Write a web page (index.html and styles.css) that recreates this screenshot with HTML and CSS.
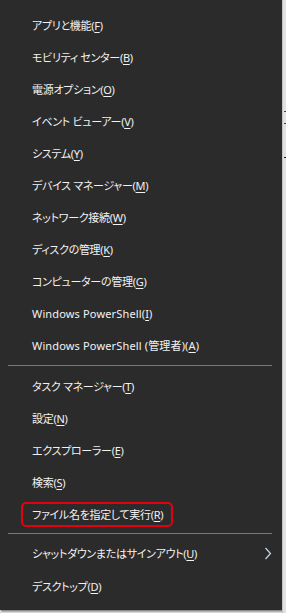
FILE: index.html
```html
<!DOCTYPE html>
<html lang="ja">
  <head>
    <meta charset="UTF-8" />
    <meta name="viewport" content="width=device-width, initial-scale=1.0" />
    <title>クイック リンク メニュー</title>
    <link rel="stylesheet" href="styles.css">
  </head>
  <body>
    <div class="screen">
      <div class="menu">
        <ul class="group">
          <li>アプリと機能(<u>F</u>)</li>
          <li>モビリティ センター(<u>B</u>)</li>
          <li>電源オプション(<u>O</u>)</li>
          <li>イベント ビューアー(<u>V</u>)</li>
          <li>システム(<u>Y</u>)</li>
          <li>デバイス マネージャー(<u>M</u>)</li>
          <li>ネットワーク接続(<u>W</u>)</li>
          <li>ディスクの管理(<u>K</u>)</li>
          <li>コンピューターの管理(<u>G</u>)</li>
          <li class="latin">Windows PowerShell(<u>I</u>)</li>
          <li class="latin">Windows PowerShell (管理者)(<u>A</u>)</li>
        </ul>
        <hr class="sep" />
        <ul class="group">
          <li>タスク マネージャー(<u>T</u>)</li>
          <li>設定(<u>N</u>)</li>
          <li>エクスプローラー(<u>E</u>)</li>
          <li>検索(<u>S</u>)</li>
          <li class="marked"><span class="highlight">ファイル名を指定して実行(<u>R</u>)</span></li>
        </ul>
        <hr class="sep sep-low" />
        <ul class="group">
          <li class="has-sub">
            <span>シャットダウンまたはサインアウト(<u>U</u>)</span>
            <svg class="chevron" width="8" height="13" viewBox="0 0 8 13">
              <path d="M1.5 1 L6.5 6.5 L1.5 12" fill="none" stroke="#c9d6ea" stroke-width="1.2" />
            </svg>
          </li>
          <li class="last">デスクトップ(<u>D</u>)</li>
        </ul>
      </div>
      <div class="behind">
        <i class="tick tick-a"></i>
        <i class="tick tick-b"></i>
        <i class="tick tick-c"></i>
      </div>
    </div>
  </body>
</html>
```

FILE: styles.css
```css
* {
  margin: 0;
  padding: 0;
  box-sizing: border-box;
}

body {
  background-color: #d6d6d6;
  font-family: "Noto Sans", "Noto Sans CJK JP", sans-serif;
  font-size: 11px;
  color: #f2f2f2;
  width: 286px;
  height: 613px;
  overflow: hidden;
}

.screen {
  display: flex;
  height: 613px;
}

.menu {
  width: 282px;
  height: 610px;
  flex-shrink: 0;
  background-color: #2b2b2b;
  padding-top: 9px;
  box-shadow: 1px 1px 0 #8a8a8a, 2px 2px 0 #b5b5b5;
}

.group {
  list-style: none;
}

.group li {
  height: 32px;
  display: flex;
  align-items: center;
  padding-left: 32px;
  font-feature-settings: "palt";
  letter-spacing: -0.3px;
  white-space: nowrap;
}

.group li.latin {
  letter-spacing: 0.15px;
}

.group u {
  text-underline-offset: 2px;
}

.sep {
  border: none;
  border-top: 1px solid #7a7a7a;
  margin: 4px 10px 4px 8px;
}

.sep-low {
  margin: 3px 10px 3px 8px;
}

.marked {
  padding-left: 21px !important;
}

.highlight {
  display: inline-block;
  border: 2px solid #e3000f;
  border-radius: 5px;
  padding: 2px 8px 2px 9px;
  line-height: 17px;
}

.has-sub {
  justify-content: space-between;
  padding-right: 10px;
}

.chevron {
  display: block;
}

.last {
  margin-top: 1px;
}

.behind {
  flex: 1;
  position: relative;
  border-left: 1px solid #c4c4c4;
  background-color: #e1e1e1;
}

.tick {
  position: absolute;
  left: 1px;
  width: 4px;
  height: 1px;
}

.tick-a {
  top: 111px;
  background-color: #4a3a78;
}

.tick-b {
  top: 123px;
  background-color: #4a3a78;
}

.tick-c {
  top: 157px;
  background-color: #111111;
}
```
